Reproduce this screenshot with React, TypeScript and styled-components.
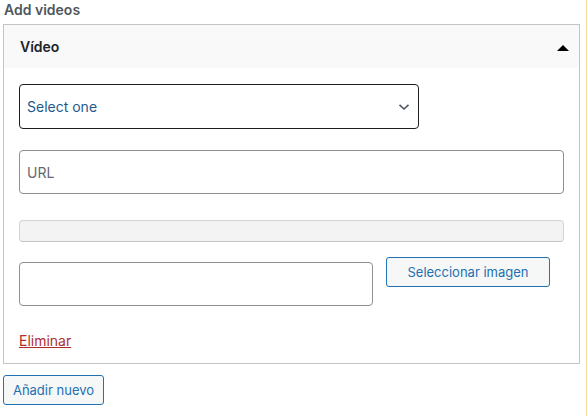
import React from "react";
import styled, { createGlobalStyle } from "styled-components";

const GlobalStyle = createGlobalStyle`
  html, body {
    margin: 0;
    padding: 0;
    background: #fff;
  }
  body {
    font-family: Inter, "Liberation Sans", sans-serif;
    color: #1d2327;
  }
`;

const Page = styled.div`
  box-sizing: border-box;
  width: 587px;
  min-height: 416px;
  padding: 0 6px 0 3px;
  border-right: 1px solid #f7dc96;
`;

const Title = styled.div`
  font-size: 14px;
  font-weight: 600;
  line-height: 20px;
  color: #50575e;
  padding-left: 1px;
  margin-bottom: 4px;
`;

const Panel = styled.div`
  border: 1px solid #c3c4c7;
  background: #fff;
`;

const PanelHeader = styled.div`
  height: 43px;
  display: flex;
  align-items: center;
  justify-content: space-between;
  padding: 0 10px 0 16px;
  background: #f9f9f9;
  font-size: 14px;
  font-weight: 600;
  color: #1d2327;
`;

const Caret = styled.span`
  width: 0;
  height: 0;
  border-left: 6px solid transparent;
  border-right: 6px solid transparent;
  border-bottom: 6px solid #000;
  margin-top: 3px;
`;

const PanelBody = styled.div`
  display: flex;
  flex-direction: column;
  padding: 16px 15px 12px 15px;
`;

const SelectBox = styled.div`
  box-sizing: border-box;
  width: 400px;
  height: 45px;
  display: flex;
  align-items: center;
  justify-content: space-between;
  padding: 0 8px 0 7px;
  border: 1px solid #1e1e1e;
  border-radius: 4px;
  font-size: 14px;
  color: #1e5a8e;
`;

const TextInput = styled.div<{ $mt: number; $width?: number }>`
  box-sizing: border-box;
  width: ${(p) => (p.$width ? `${p.$width}px` : "100%")};
  height: 44px;
  margin-top: ${(p) => p.$mt}px;
  display: flex;
  align-items: center;
  padding: 0 7px;
  border: 1px solid #8c8f94;
  border-radius: 4px;
  font-size: 14px;
  color: #646970;
  flex-shrink: 0;
`;

const DisabledBar = styled.div`
  box-sizing: border-box;
  height: 22px;
  margin-top: 26px;
  background: #f3f3f4;
  border: 1px solid #d4d4d6;
  border-bottom-color: #c3c4c7;
  border-radius: 4px;
`;

const Row = styled.div`
  display: flex;
  align-items: flex-start;
  gap: 13px;
  margin-top: 15px;
`;

const Button = styled.button`
  box-sizing: border-box;
  height: 30px;
  padding: 0 10px;
  background: #f6f7f7;
  border: 1px solid #2271b1;
  border-radius: 3px;
  color: #2271b1;
  font-family: Inter, "Liberation Sans", sans-serif;
  font-size: 13px;
  line-height: 28px;
  cursor: pointer;
`;

const ImageButton = styled(Button)`
  width: 164px;
`;

const AddButton = styled(Button)`
  width: 101px;
  margin-top: 11px;
  padding: 0;
`;

const RemoveLink = styled.a`
  align-self: flex-start;
  margin-top: 25px;
  font-size: 14px;
  line-height: 20px;
  color: #b32d2e;
  text-decoration: underline;
  cursor: pointer;
`;

function Chevron() {
  return (
    <svg width="12" height="8" viewBox="0 0 12 8" fill="none">
      <path d="M1.5 1.8 L6 6 L10.5 1.8" stroke="#50575e" strokeWidth="1.6" />
    </svg>
  );
}

export default function App() {
  return (
    <>
      <GlobalStyle />
      <Page>
        <Title>Add videos</Title>
        <Panel>
          <PanelHeader>
            <span>Vídeo</span>
            <Caret />
          </PanelHeader>
          <PanelBody>
            <SelectBox>
              <span>Select one</span>
              <Chevron />
            </SelectBox>
            <TextInput $mt={21}>URL</TextInput>
            <DisabledBar />
            <Row>
              <TextInput $mt={5} $width={354} />
              <ImageButton>Seleccionar imagen</ImageButton>
            </Row>
            <RemoveLink>Eliminar</RemoveLink>
          </PanelBody>
        </Panel>
        <AddButton>Añadir nuevo</AddButton>
      </Page>
    </>
  );
}
